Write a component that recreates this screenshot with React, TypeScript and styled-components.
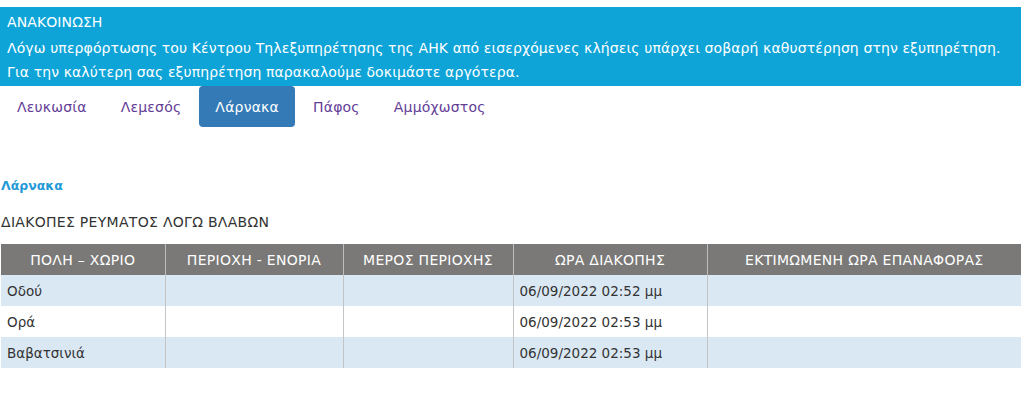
import styled, { createGlobalStyle } from 'styled-components';

const GlobalStyle = createGlobalStyle`
  body {
    margin: 0;
    padding-top: 7px;
    background: #fff;
    font-family: 'DejaVu Sans', 'Liberation Sans', sans-serif;
    color: #333;
  }
`;

const tabs = ['Λευκωσία', 'Λεμεσός', 'Λάρνακα', 'Πάφος', 'Αμμόχωστος'];

const columns = [
  { title: 'ΠΟΛΗ – ΧΩΡΙΟ', width: 164 },
  { title: 'ΠΕΡΙΟΧΗ - ΕΝΟΡΙΑ', width: 178 },
  { title: 'ΜΕΡΟΣ ΠΕΡΙΟΧΗΣ', width: 170 },
  { title: 'ΩΡΑ ΔΙΑΚΟΠΗΣ', width: 194 },
  { title: 'ΕΚΤΙΜΩΜΕΝΗ ΩΡΑ ΕΠΑΝΑΦΟΡΑΣ', width: 314 },
];

const outages = [
  { village: 'Οδού', area: '', part: '', time: '06/09/2022 02:52 μμ', restore: '' },
  { village: 'Ορά', area: '', part: '', time: '06/09/2022 02:53 μμ', restore: '' },
  { village: 'Βαβατσινιά', area: '', part: '', time: '06/09/2022 02:53 μμ', restore: '' },
];

export default function App() {
  return (
    <>
      <GlobalStyle />
      <Page>
        <Notice>
          <NoticeTitle>ΑΝΑΚΟΙΝΩΣΗ</NoticeTitle>
          <NoticeText>
            Λόγω υπερφόρτωσης του Κέντρου Τηλεξυπηρέτησης της ΑΗΚ από εισερχόμενες κλήσεις υπάρχει σοβαρή καθυστέρηση στην εξυπηρέτηση.
            <br />
            Για την καλύτερη σας εξυπηρέτηση παρακαλούμε δοκιμάστε αργότερα.
          </NoticeText>
        </Notice>

        <Pills>
          {tabs.map((t) => (
            <Pill key={t} $active={t === 'Λάρνακα'}>{t}</Pill>
          ))}
        </Pills>

        <District>Λάρνακα</District>
        <Caption>ΔΙΑΚΟΠΕΣ ΡΕΥΜΑΤΟΣ ΛΟΓΩ ΒΛΑΒΩΝ</Caption>

        <Table>
          <colgroup>
            {columns.map((c) => (
              <col key={c.title} style={{ width: c.width }} />
            ))}
          </colgroup>
          <thead>
            <tr>
              {columns.map((c) => (
                <Th key={c.title}>{c.title}</Th>
              ))}
            </tr>
          </thead>
          <tbody>
            {outages.map((row, idx) => (
              <Row key={idx} $odd={idx % 2 === 0}>
                <Td>{row.village}</Td>
                <Td>{row.area}</Td>
                <Td>{row.part}</Td>
                <Td>{row.time}</Td>
                <Td>{row.restore}</Td>
              </Row>
            ))}
          </tbody>
        </Table>
      </Page>
    </>
  );
}

const Page = styled.div`
  width: 1021px;
`;

const Notice = styled.div`
  background: #0ea4d8;
  color: #fff;
  padding: 5px 7px 4px;
  height: 79px;
  box-sizing: border-box;
`;

const NoticeTitle = styled.div`
  font-size: 14px;
  line-height: 20px;
  margin-bottom: 4px;
  letter-spacing: 0.1px;
`;

const NoticeText = styled.div`
  font-size: 14px;
  line-height: 24px;
  letter-spacing: 0.11px;
`;

const Pills = styled.div`
  display: flex;
  gap: 2px;
  height: 41px;
  padding-left: 1px;
`;

const Pill = styled.div<{ $active?: boolean }>`
  padding: 0 16px;
  display: flex;
  align-items: center;
  border-radius: 4px;
  font-size: 14px;
  letter-spacing: 0.2px;
  color: ${(p) => (p.$active ? '#fff' : '#633d96')};
  background: ${(p) => (p.$active ? '#337ab7' : 'transparent')};
`;

const District = styled.div`
  margin-top: 51px;
  padding-left: 1px;
  font-size: 12.5px;
  font-weight: bold;
  color: #1f9ad7;
  line-height: 16px;
`;

const Caption = styled.div`
  margin-top: 19px;
  padding-left: 1px;
  font-size: 14px;
  letter-spacing: 0.3px;
  line-height: 18px;
  color: #333;
`;

const Table = styled.table`
  margin-top: 13px;
  margin-left: 1px;
  width: 1020px;
  border-collapse: collapse;
  table-layout: fixed;
  font-size: 13.5px;
`;

const Th = styled.th`
  background: #7a7977;
  color: #fff;
  font-weight: normal;
  font-size: 14px;
  letter-spacing: 0.3px;
  height: 31px;
  padding: 0 4px;
  text-align: center;
  white-space: nowrap;
  border-left: 1px solid #bdbdbd;
  &:first-child {
    border-left: none;
  }
`;

const Row = styled.tr<{ $odd?: boolean }>`
  background: ${(p) => (p.$odd ? '#dae8f3' : '#fff')};
`;

const Td = styled.td`
  height: 31px;
  padding: 0 6px;
  color: #333;
  border-left: 1px solid #c4c4c4;
  &:first-child {
    border-left: none;
  }
`;
